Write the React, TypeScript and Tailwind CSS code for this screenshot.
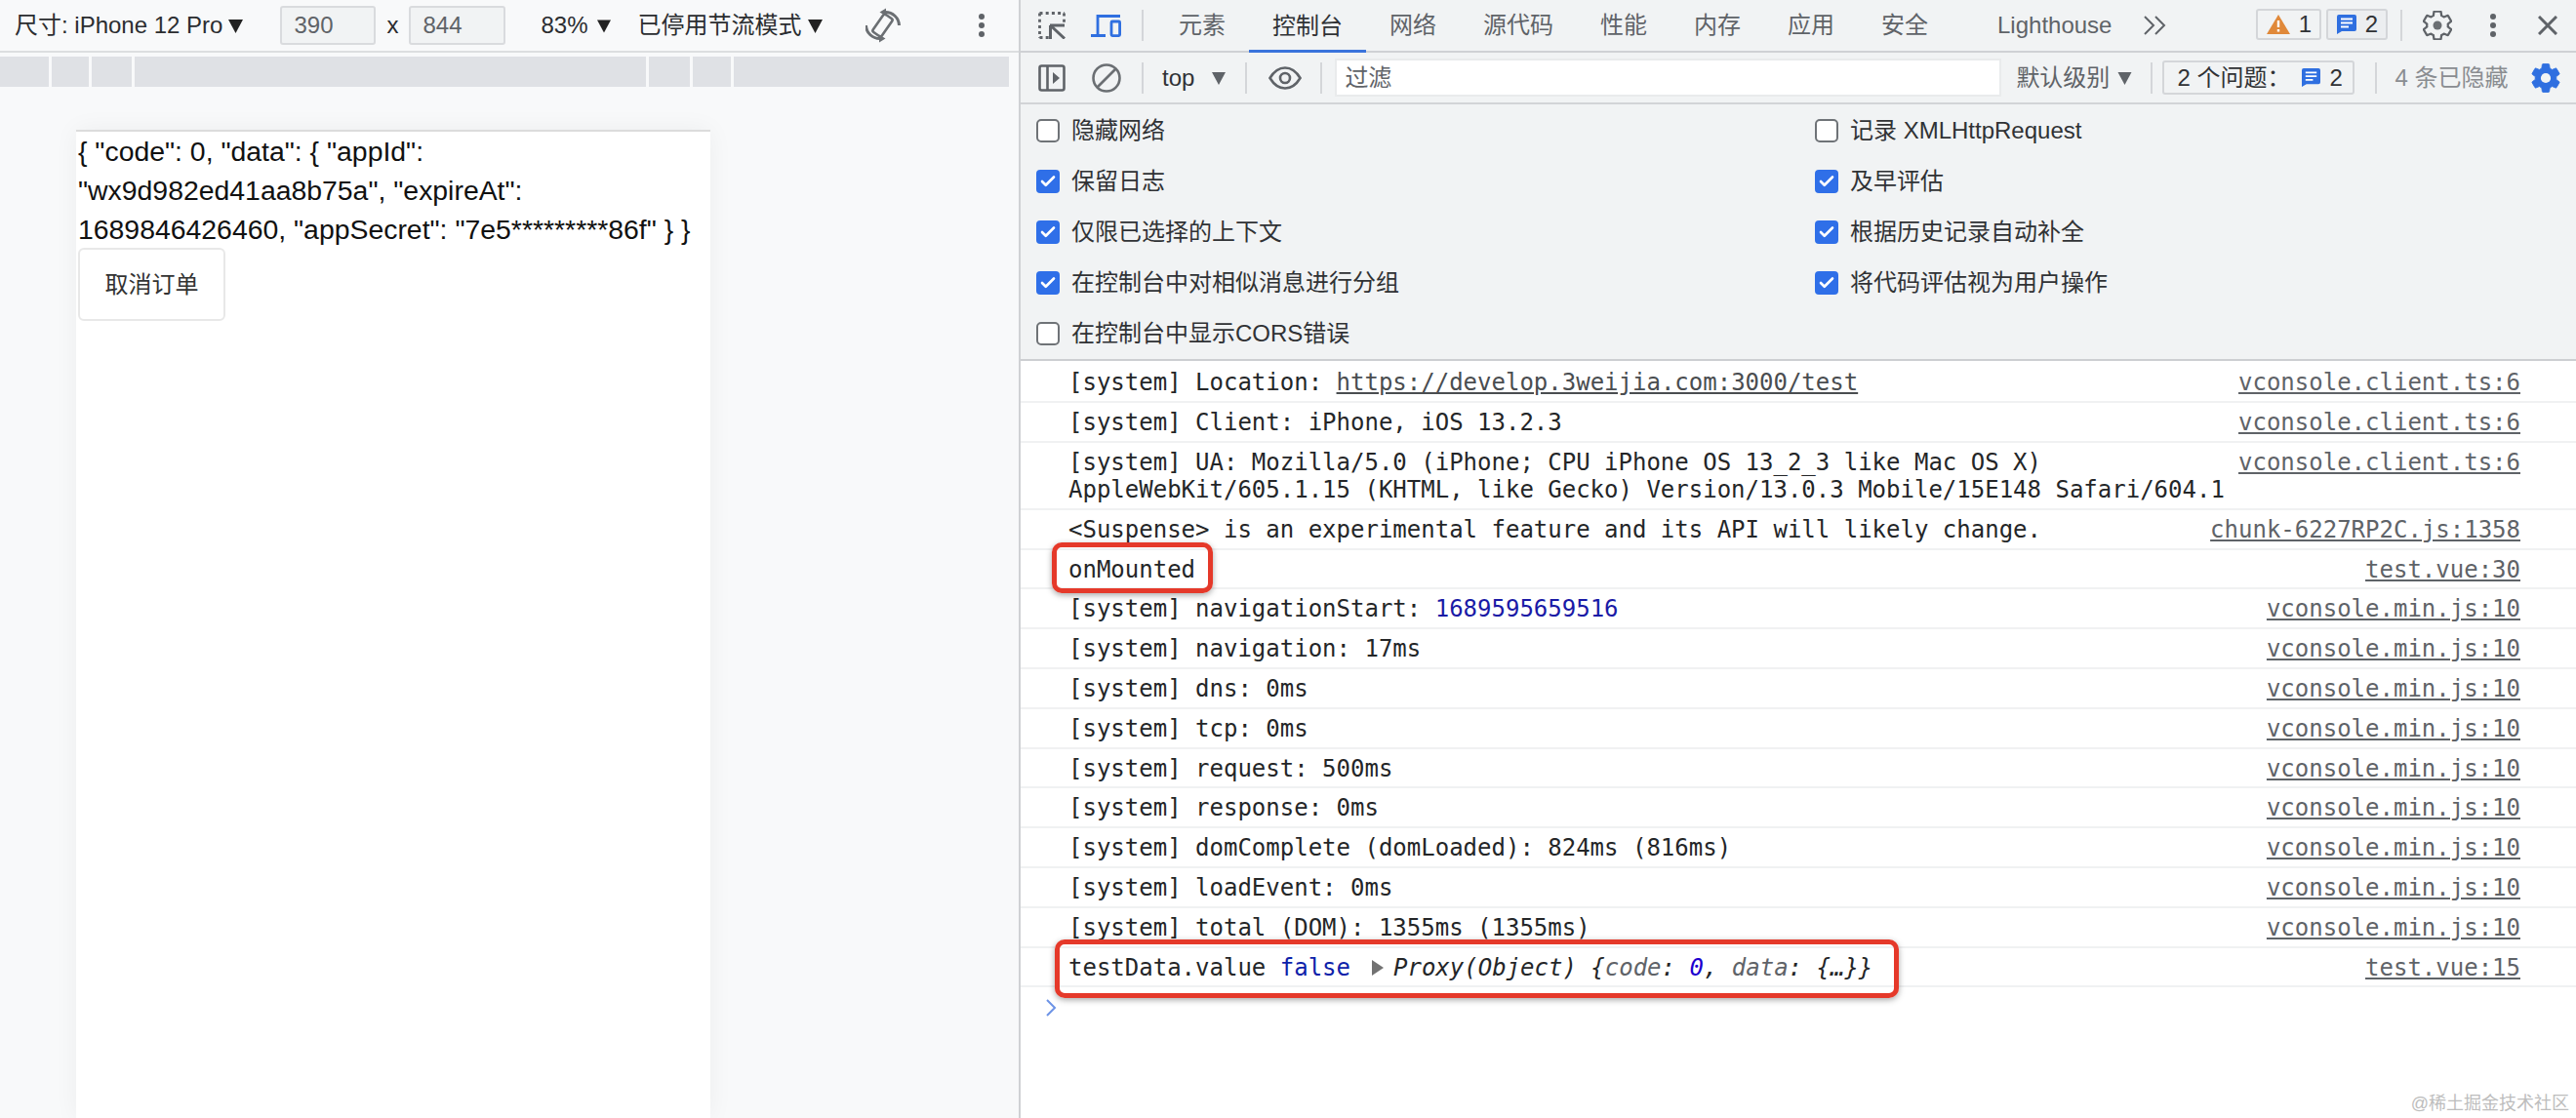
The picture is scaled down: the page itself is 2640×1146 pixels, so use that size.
import React from 'react';
import { Check } from 'lucide-react';

const tabs = ['元素', '控制台', '网络', '源代码', '性能', '内存', '应用', '安全', 'Lighthouse'];

const rulerSegments = ['w-[50px]', 'w-[38px]', 'w-[41px]', 'w-[524px]', 'w-[42px]', 'w-[39px]', 'w-[282px]'];

const leftOptions = [
  { label: '隐藏网络', on: false },
  { label: '保留日志', on: true },
  { label: '仅限已选择的上下文', on: true },
  { label: '在控制台中对相似消息进行分组', on: true },
  { label: '在控制台中显示CORS错误', on: false },
];

const rightOptions = [
  { label: '记录 XMLHttpRequest', on: false },
  { label: '及早评估', on: true },
  { label: '根据历史记录自动补全', on: true },
  { label: '将代码评估视为用户操作', on: true },
];

const timing = [
  '[system] navigation: 17ms',
  '[system] dns: 0ms',
  '[system] tcp: 0ms',
  '[system] request: 500ms',
  '[system] response: 0ms',
  '[system] domComplete (domLoaded): 824ms (816ms)',
  '[system] loadEvent: 0ms',
  '[system] total (DOM): 1355ms (1355ms)',
];

const gearPath =
  'M19.14 12.94c.04-.3.06-.61.06-.94 0-.32-.02-.64-.07-.94l2.03-1.58c.18-.14.23-.41.12-.61l-1.92-3.32c-.12-.22-.37-.29-.59-.22l-2.39.96c-.5-.38-1.03-.7-1.62-.94l-.36-2.54c-.04-.24-.24-.41-.48-.41h-3.84c-.24 0-.43.17-.47.41l-.36 2.54c-.59.24-1.13.57-1.62.94l-2.39-.96c-.22-.08-.47 0-.59.22L2.74 8.87c-.12.21-.08.47.12.61l2.03 1.58c-.05.3-.09.63-.09.94s.02.64.07.94l-2.03 1.58c-.18.14-.23.41-.12.61l1.92 3.32c.12.22.37.29.59.22l2.39-.96c.5.38 1.03.7 1.62.94l.36 2.54c.05.24.24.41.48.41h3.84c.24 0 .44-.17.47-.41l.36-2.54c.59-.24 1.13-.56 1.62-.94l2.39.96c.22.08.47 0 .59-.22l1.92-3.32c.12-.22.07-.47-.12-.61l-2.01-1.58z';

const Triangle = ({ className }: { className: string }) => (
  <svg viewBox="0 0 14 14" className={className} fill="currentColor">
    <path d="M0 1h14L7 14z" />
  </svg>
);

const Kebab = () => (
  <svg viewBox="0 0 8 24" className="w-[8px] h-[24px] text-[#5f6368]" fill="currentColor">
    <circle cx="4" cy="3" r="3" />
    <circle cx="4" cy="12" r="3" />
    <circle cx="4" cy="21" r="3" />
  </svg>
);

const Separator = ({ className = '' }: { className?: string }) => (
  <div className={`w-[2px] h-[32px] bg-[#d4d6d9] shrink-0 ${className}`} />
);

const MessageIcon = ({ className }: { className: string }) => (
  <svg viewBox="0 0 20 20" className={className}>
    <path d="M0 2a2 2 0 0 1 2-2h16a2 2 0 0 1 2 2v13a2 2 0 0 1-2 2H5l-5 3z" fill="#2f6fe0" />
    <path d="M4 4.500h12M4 8.500h12M4 12.500h8" stroke="#fff" strokeWidth="1.8" />
  </svg>
);

const GearIcon = ({ className, solid }: { className: string; solid?: boolean }) => (
  <svg viewBox="2 2 20 20" className={className}>
    {solid ? (
      <>
        <path d={gearPath} fill="#2f6fe0" stroke="#2f6fe0" strokeWidth="0.6" />
        <circle cx="12" cy="12" r="3.400" fill="#f1f3f4" />
      </>
    ) : (
      <>
        <path d={gearPath} fill="none" stroke="#5f6368" strokeWidth="1.500" strokeLinejoin="round" />
        <circle cx="12" cy="12" r="3" fill="#6b6f73" />
      </>
    )}
  </svg>
);

const Option = ({ label, on }: { label: string; on: boolean }) => (
  <div className="h-[52px] flex items-center gap-[12px]">
    {on ? (
      <div className="w-[24px] h-[24px] rounded-[4px] bg-[#2f6fe8] flex items-center justify-center">
        <Check className="w-[18px] h-[18px] text-white" strokeWidth={3.5} />
      </div>
    ) : (
      <div className="w-[24px] h-[24px] rounded-[5px] bg-white border-2 border-[#6f7377]" />
    )}
    <span className="text-[24px] text-[#303235]">{label}</span>
  </div>
);

const Row = ({ children, source, className = 'h-[40.8px]' }: { children: React.ReactNode; source: string; className?: string }) => (
  <div className={`${className} box-border border-b-2 border-[#f0f1f2] pl-[49px] pr-[57px] pt-[6px] flex justify-between whitespace-pre leading-[28px] text-[#242628]`}>
    <div>{children}</div>
    <span className="underline text-[#5f6368]">{source}</span>
  </div>
);

export default function App() {
  return (
    <div className="relative w-[2640px] h-[1146px] overflow-hidden flex bg-white font-['Liberation_Sans','Noto_Sans_CJK_SC',sans-serif]">
      {/* Device preview */}
      <div className="w-[1044px] shrink-0 bg-[#f8f9fa] flex flex-col">
        <div className="h-[54px] shrink-0 border-b-2 border-[#dcdee0] flex items-center text-[24px] text-[#2b2d30]">
          <span className="ml-[15px]">尺寸: iPhone 12 Pro</span>
          <Triangle className="ml-[6px] w-[15px] h-[15px] text-[#222]" />
          <div className="ml-[38px] w-[98px] h-[40px] box-border border-2 border-[#d9dbde] rounded-[3px] bg-[#f1f3f4] pl-[12px] leading-[36px] text-[#5f6368]">390</div>
          <span className="ml-[11px] w-[23px]">x</span>
          <div className="w-[99px] h-[40px] box-border border-2 border-[#d9dbde] rounded-[3px] bg-[#f1f3f4] pl-[12px] leading-[36px] text-[#5f6368]">844</div>
          <span className="ml-[36px]">83%</span>
          <Triangle className="ml-[9px] w-[14px] h-[15px] text-[#222]" />
          <span className="ml-[28px]">已停用节流模式</span>
          <Triangle className="ml-[6px] w-[15px] h-[15px] text-[#222]" />
          <svg viewBox="0 0 36 36" className="ml-[44px] w-[36px] h-[36px]" fill="none" stroke="#6b6f73">
            <rect x="12" y="7" width="11" height="22" rx="2" strokeWidth="2.600" transform="rotate(35 17.500 18)" />
            <path d="M20 4.500A14 14 0 0 1 34.500 18M15 31.500A14 14 0 0 1 .5 18" strokeWidth="3" />
            <path d="M21 0.500v8l-6.500-4zM14 35.500v-8l6.500 4z" fill="#6b6f73" stroke="none" />
          </svg>
          <div className="ml-[79px] flex"><Kebab /></div>
        </div>
        <div className="h-[31px] shrink-0 mt-[4px] flex gap-[3px]">
          {rulerSegments.map((w, i) => (
            <div key={i} className={`${w} bg-[#dfe1e5]`} />
          ))}
        </div>
        <div className="flex-1 pt-[44px] pl-[78px]">
          <div className="w-[650px] h-full bg-white border-t-2 border-[#dcdcdc] pl-[2px] shadow-[0_0_24px_rgba(0,0,0,0.05)]">
            <p className="text-[28.4px] leading-[40px] text-[#111] w-[646px] whitespace-nowrap">
              {'{ "code": 0, "data": { "appId":'}
              <br />
              {'"wx9d982ed41aa8b75a", "expireAt":'}
              <br />
              {'1689846426460, "appSecret": "7e5*********86f" } }'}
            </p>
            <div className="w-[151px] h-[75px] box-border border-2 border-[#e8e8e8] rounded-[6px] bg-white flex items-center justify-center text-[24px] text-[#333] mt-[-1px]">
              取消订单
            </div>
          </div>
        </div>
      </div>

      {/* DevTools */}
      <div className="flex-1 min-w-0 flex flex-col border-l-2 border-[#cfd1d4] bg-white">
        <div className="h-[54px] shrink-0 bg-[#f1f3f4] border-b-2 border-[#cfd1d4] flex items-center text-[24px] text-[#5f6368]">
          <svg viewBox="0 0 28 28" className="ml-[18px] w-[28px] h-[28px]" fill="none" stroke="#5f6368" strokeWidth="2.800">
            <path d="M1.500 1.500H27M1.500 1.500V27M26.500 1.500V11M1.500 26.500H11" strokeDasharray="3 3.200" />
            <path d="M12 14h15M12.500 14v14M12.500 14L27 27.500" strokeWidth="3" />
          </svg>
          <svg viewBox="0 0 31 23" className="ml-[26px] w-[31px] h-[23px]" fill="none" stroke="#2f6fe0" strokeWidth="2.800">
            <path d="M30 1.500H7V21M0 21.500h15" />
            <rect x="21" y="7" width="8.600" height="14.600" rx="1" />
          </svg>
          <Separator className="ml-[21px]" />
          <div className="ml-[12px] flex h-full">
            {tabs.map((tab) => (
              <div
                key={tab}
                className={
                  tab === '控制台'
                    ? 'px-[24px] flex items-center text-[#303235] border-b-[3px] border-[#3a74dc] h-[54px] pt-[3px]'
                    : tab === 'Lighthouse'
                      ? 'ml-[23px] px-[24px] flex items-center h-[52px]'
                      : 'px-[24px] flex items-center h-[52px]'
                }
              >
                {tab}
              </div>
            ))}
          </div>
          <svg viewBox="0 0 24 20" className="ml-[8px] w-[24px] h-[20px]" fill="none" stroke="#5f6368" strokeWidth="2">
            <path d="M2 1l9 9-9 9M13 1l9 9-9 9" />
          </svg>
          <div className="ml-[92px] w-[67px] h-[32px] -mt-[3px] box-border border-2 border-[#d4d6d9] rounded-[3px] flex items-center justify-center gap-[9px] text-[#303235]">
            <svg viewBox="0 0 24 20" className="w-[24px] h-[20px]">
              <path d="M12 0l12 20H0z" fill="#e0893a" />
              <path d="M12 6v7M12 15v2.500" stroke="#fff" strokeWidth="2.400" />
            </svg>
            1
          </div>
          <div className="ml-[5px] w-[63px] h-[32px] -mt-[3px] box-border border-2 border-[#d4d6d9] rounded-[3px] bg-[#eceef0] flex items-center justify-center gap-[9px] text-[#303235]">
            <MessageIcon className="w-[20px] h-[20px]" />
            2
          </div>
          <Separator className="ml-[13px]" />
          <GearIcon className="ml-[21px] w-[30px] h-[30px]" />
          <div className="ml-[38px] flex"><Kebab /></div>
          <svg viewBox="0 0 20 20" className="ml-[42px] w-[20px] h-[20px]" fill="none" stroke="#5f6368" strokeWidth="3">
            <path d="M1 1l18 18M19 1L1 19" />
          </svg>
        </div>

        <div className="h-[53px] shrink-0 bg-[#f1f3f4] border-b-2 border-[#d2d4d7] flex items-center text-[24px] text-[#5f6368]">
          <svg viewBox="0 0 28 28" className="ml-[18px] w-[28px] h-[28px]" fill="none" stroke="#5f6368" strokeWidth="2.600">
            <rect x="1.500" y="1.500" width="25" height="25" rx="2" />
            <path d="M9.500 1.500v25" />
            <path d="M15 8l7 6-7 6z" fill="#5f6368" stroke="none" />
          </svg>
          <svg viewBox="0 0 30 30" className="ml-[27px] w-[30px] h-[30px]" fill="none" stroke="#6b6f73" strokeWidth="2.600">
            <circle cx="15" cy="15" r="13.500" />
            <path d="M24.500 5.500l-19 19" />
          </svg>
          <Separator className="ml-[21px]" />
          <span className="ml-[19px] text-[#303235]">top</span>
          <Triangle className="ml-[18px] w-[14px] h-[14px] text-[#5f6368]" />
          <Separator className="ml-[20px]" />
          <svg viewBox="0 0 34 24" className="ml-[22px] w-[34px] h-[24px]" fill="none" stroke="#5f6368" strokeWidth="2.600">
            <path d="M1.500 12C6 4.500 11 1.500 17 1.500S28 4.500 32.500 12C28 19.500 23 22.500 17 22.500S6 19.500 1.500 12z" />
            <circle cx="17" cy="12" r="5" />
          </svg>
          <Separator className="ml-[19px]" />
          <div className="ml-[13px] w-[683px] h-[39px] bg-white border-2 border-[#e9ebec] pl-[8px] leading-[35px] box-border">过滤</div>
          <span className="ml-[15px]">默认级别</span>
          <Triangle className="ml-[8px] w-[15px] h-[14px] text-[#5f6368]" />
          <Separator className="ml-[19px]" />
          <div className="ml-[10px] w-[197px] h-[35px] box-border border-2 border-[#d4d6d9] rounded-[3px] pl-[13px] flex items-center text-[#303235]">
            <span className="whitespace-pre">2 个问题：</span>
            <MessageIcon className="ml-[12px] w-[19px] h-[19px]" />
            <span className="ml-[9px]">2</span>
          </div>
          <Separator className="ml-[21px]" />
          <span className="ml-[18px] text-[#8a8d91]">4 条已隐藏</span>
          <GearIcon solid className="ml-[24px] w-[30px] h-[30px]" />
        </div>

        <div className="h-[263px] shrink-0 bg-[#f1f3f4] border-b-2 border-[#cdcfd2] box-border pt-[1px] flex">
          <div className="w-[814px] pl-[16px]">
            {leftOptions.map((o) => (
              <Option key={o.label} {...o} />
            ))}
          </div>
          <div>
            {rightOptions.map((o) => (
              <Option key={o.label} {...o} />
            ))}
          </div>
        </div>

        {/* Console output */}
        <div className="flex-1 font-['DejaVu_Sans_Mono','Noto_Sans_CJK_SC',monospace] text-[24px]">
          <Row source="vconsole.client.ts:6" className="h-[43px] !pt-[8px]">
            {'[system] Location: '}
            <span className="underline text-[#4a4d50]">https://develop.3weijia.com:3000/test</span>
          </Row>
          <Row source="vconsole.client.ts:6">[system] Client: iPhone, iOS 13.2.3</Row>
          <Row source="vconsole.client.ts:6" className="h-[69px]">
            {'[system] UA: Mozilla/5.0 (iPhone; CPU iPhone OS 13_2_3 like Mac OS X)\nAppleWebKit/605.1.15 (KHTML, like Gecko) Version/13.0.3 Mobile/15E148 Safari/604.1'}
          </Row>
          <Row source="chunk-6227RP2C.js:1358">{'<Suspense> is an experimental feature and its API will likely change.'}</Row>
          <Row source="test.vue:30">onMounted</Row>
          <Row source="vconsole.min.js:10">
            {'[system] navigationStart: '}
            <span className="text-[#1a1aa6]">1689595659516</span>
          </Row>
          {timing.map((line) => (
            <Row key={line} source="vconsole.min.js:10">{line}</Row>
          ))}
          <Row source="test.vue:15">
            {'testData.value '}
            <span className="text-[#0d22aa]">false</span>
            <span className="inline-block ml-[22px] mr-[10px] w-0 h-0 border-y-[8px] border-y-transparent border-l-[12px] border-l-[#727272]" />
            <span className="italic">
              {'Proxy(Object) {'}
              <span className="text-[#5f6368]">code</span>
              {': '}
              <span className="text-[#1c00cf]">0</span>
              {', '}
              <span className="text-[#5f6368]">data</span>
              {': {…}}'}
            </span>
          </Row>
          <svg viewBox="0 0 12 18" className="ml-[25px] mt-[12px] w-[12px] h-[18px]" fill="none" stroke="#6d93e6" strokeWidth="2">
            <path d="M2 1l8 8-8 8" />
          </svg>
        </div>
      </div>

      {/* Red annotation boxes */}
      <div className="absolute left-[1078px] top-[556px] w-[165px] h-[52px] border-[5px] border-[#e5392a] rounded-[10px] shadow-[0_2px_6px_rgba(0,0,0,0.35)]" />
      <div className="absolute left-[1081px] top-[963px] w-[865px] h-[60px] border-[5px] border-[#e5392a] rounded-[10px] shadow-[0_2px_6px_rgba(0,0,0,0.35)]" />

      {/* Watermark */}
      <span className="absolute right-[7px] top-[1118px] text-[18px] text-[#bdbdbd]">@稀土掘金技术社区</span>
    </div>
  );
}
